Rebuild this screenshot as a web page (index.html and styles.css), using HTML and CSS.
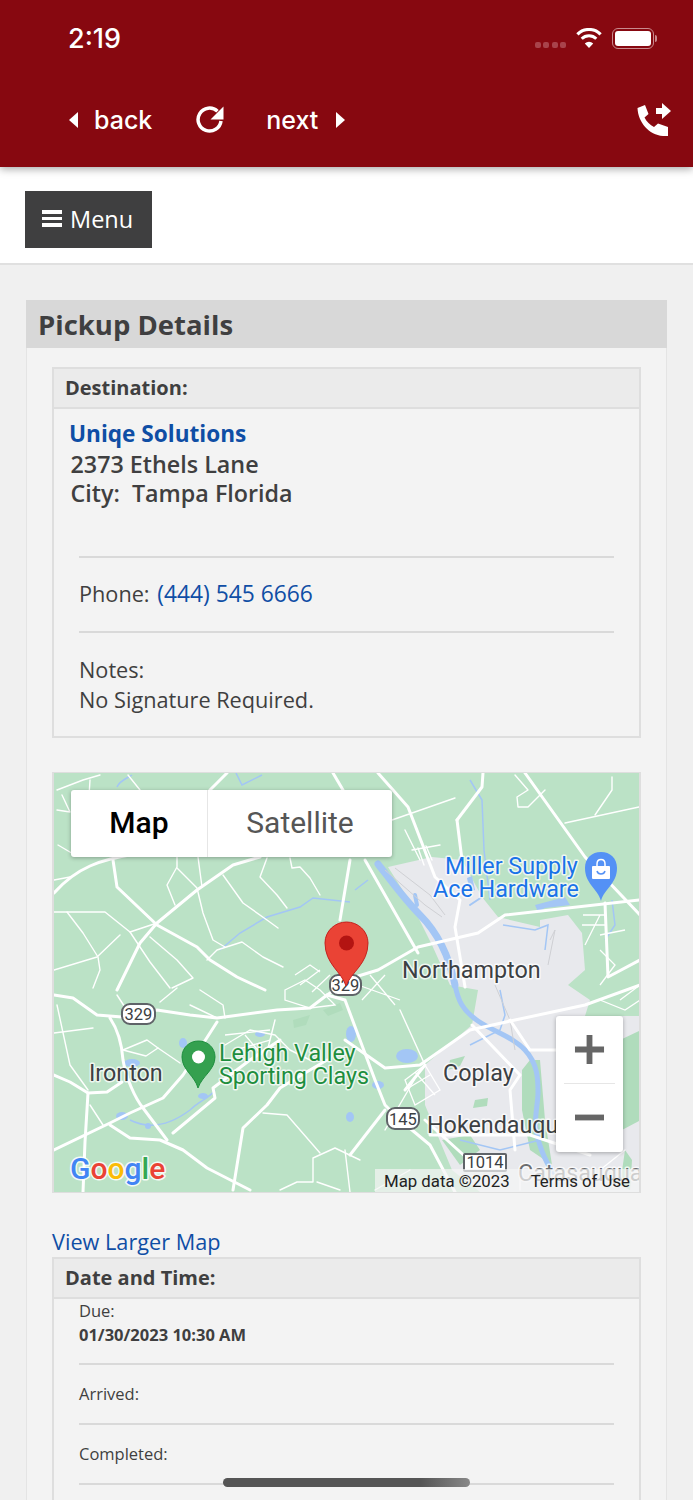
FILE: index.html
```html
<!DOCTYPE html>
<html lang="en">
<head>
    <meta charset="UTF-8">
    <meta name="viewport" content="width=device-width, initial-scale=1.0">
    <title>Pickup Details</title>
    <link rel="stylesheet" href="styles.css">
</head>
<body>
    <header class="app-header">
        <div class="status-bar">
            <span class="clock">2:19</span>
            <div class="status-icons">
                <div class="signal"><i></i><i></i><i></i><i></i></div>
                <svg class="wifi" viewBox="0 0 26 20"><path d="M13 20 8.800 15.400A6.200 6.200 0 0 1 17.200 15.400z" fill="#fff"/><path d="M5.700 10.800A10.400 10.400 0 0 1 20.300 10.800" fill="none" stroke="#fff" stroke-width="3"/><path d="M1.400 6.300A16.400 16.400 0 0 1 24.600 6.300" fill="none" stroke="#fff" stroke-width="3.200"/></svg>
                <div class="battery"><div class="battery-body"><div class="battery-fill"></div></div><div class="battery-cap"></div></div>
            </div>
        </div>
        <nav class="nav-bar">
            <a class="nav-link back-link"><span class="arrow arrow-left"></span>back</a>
            <svg class="reload" viewBox="196 107 28 28"><path d="M217.500 112.200A11.500 11.500 0 1 0 221 122" fill="none" stroke="#fff" stroke-width="3.500"/><path d="M223.500 107.500V120.500H210.500z" fill="#fff"/></svg>
            <a class="nav-link next-link">next<span class="arrow arrow-right"></span></a>
            <svg class="call-forward" viewBox="637 103 34 34"><path d="M637.500 108 645 105 648.500 114 644.500 117.500C646.500 121.500 650 125 654 127L658 123.500 668 127V136H663C649 135 638 122 637.500 108z"/><path d="M656 108h6v-5l9 8-9 8v-5h-6z"/></svg>
        </nav>
    </header>

    <div class="menu-band">
        <button class="menu-btn"><span class="bars"><i></i><i></i><i></i></span>Menu</button>
    </div>

    <main class="panel">
        <h1 class="panel-title">Pickup Details</h1>
        <div class="panel-body">

            <section class="box">
                <h2 class="box-title">Destination:</h2>
                <div class="address">
                    <a class="company">Uniqe Solutions</a>
                    <div class="address-line">2373 Ethels Lane</div>
                    <div class="address-line">City:&nbsp; Tampa Florida</div>
                </div>
                <div class="row phone-row">Phone: <a class="phone">(444) 545 6666</a></div>
                <div class="row notes-row">Notes:<br>No Signature Required.</div>
            </section>

            <div class="map">
                <svg class="map-art" viewBox="54 773 587 419">
                    <rect x="54" y="773" width="587" height="419" fill="#bbe2c6"/>
                    <g fill="#e8e9ed">
                        <path d="M388 867 432 857 462 860 482 897 498 917 540 927 540 920 568 915 582 933 585 970 568 985 590 1000 585 1016 641 1016 641 1192 480 1192 452 1170 425 1105 425 1065 472 1025 478 990 450 985 432 945 412 905z"/>
                    </g>
                    <g fill="#b0dcbc">
                        <path d="M522 1070 530 1060 540 1060 545 1120 552 1165 530 1150 522 1110z"/>
                        <path d="M620 1040 641 1030 641 1120 622 1130z"/>
                        <path d="M475 1100 488 1098 487 1106 473 1108z"/>
                        <path d="M450 1060 465 1056 460 1066 448 1070z"/>
                        <path d="M442 1140 470 1135 480 1150 460 1165z"/>
                        <path d="M323 1010 340 1003 343 1010 328 1016z"/>
                        <path d="M293 1020 310 1015 306 1025 294 1028z"/>
                        <path d="M620 1185 625 1150 632 1160 630 1190z"/>
                    </g>
                    <g fill="none" stroke="#a3c6f5" stroke-linecap="round" stroke-linejoin="round">
                        <path d="M378 864C392 882 405 900 420 915S448 950 455 985" stroke-width="7"/>
                        <path d="M455 985C458 1000 462 1010 478 1021S512 1036 525 1050 538 1080 538 1092 534 1118 536 1130 544 1160 553 1172" stroke-width="5"/>
                        <path d="M415 895 417 905" stroke-width="4"/>
                        <path d="M470 905 482 897" stroke-width="2"/>
                    </g>
                    <g fill="#a3c6f5">
                        <path d="M535 905 565 897 570 905 545 908 538 912z"/>
                        <path d="M467 878 472 876 475 890 470 892z"/>
                        <ellipse cx="183" cy="1043" rx="4" ry="5"/>
                        <ellipse cx="132" cy="1063" rx="8" ry="4"/>
                        <ellipse cx="122" cy="1116" rx="6" ry="4"/>
                        <ellipse cx="203" cy="1096" rx="5" ry="3"/>
                        <ellipse cx="148" cy="1126" rx="3" ry="3"/>
                        <ellipse cx="407" cy="1056" rx="11" ry="7"/>
                        <ellipse cx="378" cy="1085" rx="6" ry="4"/>
                        <ellipse cx="351" cy="1034" rx="5" ry="8"/>
                        <ellipse cx="350" cy="1117" rx="4" ry="5"/>
                        <ellipse cx="260" cy="1034" rx="5" ry="3"/>
                    </g>
                    <g fill="none" stroke="#a3c6f5" stroke-width="1.500">
                        <path d="M220 950 240 933 267 917 300 907 313 898 350 902"/>
                        <path d="M470 780 482 800 484 850 490 900"/>
                        <path d="M503 925 535 930 548 925 545 950"/>
                        <path d="M117 787C120 780 128 778 132 775"/>
                        <path d="M236 773 242 785 262 775"/>
                        <path d="M130 1120C150 1130 170 1125 190 1110 200 1100 210 1098 215 1090"/>
                        <path d="M460 1140 500 1150 540 1140"/>
                        <path d="M500 990 505 1015 500 1030 470 1045"/>
                        <path d="M355 890 368 880"/>
                        <path d="M605 940 615 925 612 900"/>
                    </g>
                    <g fill="none" stroke="#cfd0d4" stroke-width="1">
                        <path d="M385 870 425 905 442 917"/>
                        <path d="M395 868 430 895 445 915"/>
                        <path d="M550 940 555 930 548 965"/>
                        <path d="M495 985 510 1020 515 1050"/>
                    </g>
                    <g fill="none" stroke="#fff" stroke-width="1.400" stroke-linejoin="round" stroke-linecap="round">
                        <path d="M54 912H105L130 932 157 923"/>
                        <path d="M67 912 83 933 98 957 100 970 93 988"/>
                        <path d="M54 970 97 957 120 935"/>
                        <path d="M130 932 150 962 170 988"/>
                        <path d="M150 937 177 960 193 978 172 988"/>
                        <path d="M177 857V867L167 885 175 905"/>
                        <path d="M177 868 197 888 203 913 213 940 225 947"/>
                        <path d="M198 857 202 887"/>
                        <path d="M223 875 243 903 267 920 278 928"/>
                        <path d="M267 858 260 877 277 895 287 908"/>
                        <path d="M290 858 292 868 300 867 310 878 320 895"/>
                        <path d="M207 960 217 950 242 942 263 957 283 967"/>
                        <path d="M57 790 83 780 100 775"/>
                        <path d="M57 810 70 812 62 795"/>
                        <path d="M54 880 70 877"/>
                        <path d="M58 845 75 855 90 850"/>
                        <path d="M140 790 128 775 M88 812 90 780"/>
                        <path d="M565 823 639 807"/>
                        <path d="M595 815 612 790 612 777"/>
                        <path d="M515 775 528 790 517 797 518 807 528 807 545 790"/>
                        <path d="M392 820 455 798"/>
                        <path d="M405 830 420 860 M412 850 440 845 M418 848 424 865 M426 846 432 860"/>
                        <path d="M54 1033 93 1028"/>
                        <path d="M57 1005 70 1065 88 1090"/>
                        <path d="M123 1050 147 1040 158 1048 146 1056 123 1050"/>
                        <path d="M158 1048 180 1063"/>
                        <path d="M90 1105 103 1125"/>
                        <path d="M263 1113 287 1115 320 1153"/>
                        <path d="M280 1190 297 1182H313L313 1158 335 1148 360 1160"/>
                        <path d="M317 1182 340 1190"/>
                        <path d="M117 995 130 1015 M160 1002 177 988 M190 1005 217 1018 M200 990 223 1005 225 1018"/>
                        <path d="M275 1020 265 1060 M225 1045 250 1030 275 1035 290 1050 310 1060"/>
                        <path d="M400 1010 425 1065 M420 1070 385 1130"/>
                        <path d="M600 1170 625 1150 M520 1170 520 1190"/>
                        <path d="M345 1150 350 1192 M375 1190 410 1170"/>
                    </g>
                    <g fill="none" stroke="#fff" stroke-width="1.300">
                        <path d="M285 990 305 980 320 990 335 1005 310 1008 285 1000z"/>
                        <path d="M295 975 310 965 320 972 M300 985 320 970 M312 992 330 975"/>
                        <path d="M225 1035 270 1030 M235 1050 270 1040 M245 1035 262 1055"/>
                        <path d="M405 1080 425 1065 440 1090 415 1105z M415 1072 435 1095 M405 1090 430 1075"/>
                        <path d="M583 915 605 915 M582 925 605 925 M585 945 600 915 M600 950 615 965 600 985 M600 935 625 930"/>
                        <path d="M358 985 400 1000 M370 975 395 1005 M362 1000 385 975"/>
                        <path d="M600 1000 625 1010 640 1000 M620 1000 640 985"/>
                    </g>
                    <g fill="none" stroke="#fff" stroke-width="3" stroke-linejoin="round" stroke-linecap="round">
                        <path d="M54 893C62 884 72 874 90 866S120 857 165 848"/>
                        <path d="M113 860 117 887 157 925 197 947 210 960 237 977 265 990"/>
                        <path d="M117 990 140 943 157 923 197 890 233 865 260 857"/>
                        <path d="M54 995 73 998 97 1015 122 1017 157 1010 190 1015 217 1018 277 1010 310 1008 327 995 355 977 378 970 418 947 478 933 505 915 640 900"/>
                        <path d="M110 1018C118 1030 122 1045 123 1060 126 1078 135 1098 143 1108L167 1140"/>
                        <path d="M54 1150 110 1123 130 1113 163 1098 183 1075 217 1022"/>
                        <path d="M110 1125 130 1138 160 1140 183 1150 207 1168 250 1190"/>
                        <path d="M173 1133 215 1098 213 1088 250 1060 280 1040"/>
                        <path d="M233 1190 243 1128 267 1105 280 1088 310 1070 327 1060"/>
                        <path d="M54 1075 70 1082 88 1093 107 1092 122 1082"/>
                        <path d="M88 1093 85 1142 83 1192"/>
                        <path d="M378 773 408 807 435 877 460 900 455 927 465 987"/>
                        <path d="M457 820 482 787 483 773"/>
                        <path d="M457 820 462 860"/>
                        <path d="M525 773 585 857 640 915"/>
                        <path d="M340 920 350 860 M333 773 343 790"/>
                        <path d="M210 790 227 773"/>
                        <path d="M365 860 418 953"/>
                        <path d="M605 903 608 977 640 960"/>
                        <path d="M327 995 345 1000 375 1080 385 1105 400 1120 430 1145 455 1192"/>
                        <path d="M345 1040 385 1068 420 1065 470 1030 515 1020 585 1005 640 985"/>
                        <path d="M385 1110 350 1155 M405 1090 425 1065"/>
                        <path d="M425 1120 480 1170 M430 1135 530 1135 590 1155"/>
                        <path d="M472 1025 520 1075 510 1090 515 1150"/>
                        <path d="M510 1020 530 1050 560 1050"/>
                    </g>
                    <g class="place-dark">
                        <text x="402" y="978">Northampton</text>
                        <text x="89" y="1081">Ironton</text>
                        <text x="443" y="1081">Coplay</text>
                        <text x="427" y="1133">Hokendauqua</text>
                        <text x="518" y="1181" class="place-faded">Catasauqua</text>
                    </g>
                    <g class="place-blue">
                        <text x="445" y="874">Miller Supply</text>
                        <text x="433" y="897">Ace Hardware</text>
                    </g>
                    <g class="place-green">
                        <text x="219" y="1061">Lehigh Valley</text>
                        <text x="219" y="1084">Sporting Clays</text>
                    </g>
                    <g class="shield">
                        <rect x="122" y="1004" width="33" height="20" rx="8"/>
                        <text x="138.500" y="1020">329</text>
                        <rect x="330" y="975" width="31" height="20" rx="8"/>
                        <text x="345.500" y="991">329</text>
                        <rect x="387" y="1108" width="32" height="21" rx="8"/>
                        <text x="403" y="1125">145</text>
                    </g>
                    <g class="shield shield-square">
                        <rect x="464" y="1154" width="42" height="17" rx="1"/>
                        <text x="485" y="1168">1014</text>
                    </g>
                    <path d="M346 986C342 972 325 964 325 943 325 931 335 922 346.500 922 358 922 368 931 368 943 368 964 351 972 346 986z" fill="#ea4335" stroke="#c5221f"/>
                    <circle cx="346.500" cy="943" r="7.500" fill="#b31412"/>
                    <path d="M198 1088C195 1076 182 1070 182 1057 182 1048 189 1041 198.500 1041 208 1041 215 1048 215 1057 215 1070 202 1076 198 1088z" fill="#34a04f" stroke="#1e8e3e"/>
                    <circle cx="198.500" cy="1057" r="6.500" fill="#fff"/>
                    <path d="M601 901C598 889 585 884 585 868 585 858 592 852 601 852 610 852 617 858 617 868 617 884 604 889 601 901z" fill="#5491f5"/>
                    <rect x="592" y="866" width="18" height="13" rx="1" fill="#fff"/>
                    <path d="M597 866V864C597 858 605 858 605 864V866" fill="none" stroke="#fff" stroke-width="1.500"/>
                    <path d="M597 871C598 875 604 875 605 871" fill="none" stroke="#5491f5" stroke-width="1.500"/>
                    <text class="google" x="70" y="1179"><tspan fill="#4285f4">G</tspan><tspan fill="#ea4335">o</tspan><tspan fill="#fbbc05">o</tspan><tspan fill="#4285f4">g</tspan><tspan fill="#34a853">l</tspan><tspan fill="#ea4335">e</tspan></text>
                </svg>
                <div class="map-type">
                    <div class="map-type-btn active">Map</div>
                    <div class="map-type-btn">Satellite</div>
                </div>
                <div class="zoom-ctrl">
                    <div class="zoom-btn"><svg viewBox="0 0 32 32"><path d="M13 1h6v12h12v6H19v12h-6V19H1v-6h12z"/></svg></div>
                    <div class="zoom-sep"></div>
                    <div class="zoom-btn"><svg viewBox="0 0 32 32"><path d="M1 13h30v6H1z"/></svg></div>
                </div>
                <div class="attribution"><span>Map data ©2023</span><span>Terms of Use</span></div>
            </div>

            <a class="larger-map">View Larger Map</a>

            <section class="box date-box">
                <h2 class="box-title">Date and Time:</h2>
                <div class="date-row due">Due:<br><strong>01/30/2023 10:30 AM</strong></div>
                <div class="date-row">Arrived:</div>
                <div class="date-row">Completed:</div>
            </section>
        </div>
    </main>

    <div class="home-indicator"></div>
</body>
</html>
```

FILE: styles.css
```css
html, body {
    height: 1500px;
    overflow: hidden;
}
body {
    margin: 0;
    background: #f0f0f0;
    font-family: "Open Sans", "Liberation Sans", sans-serif;
    color: #3f3f40;
}
a {
    text-decoration: none;
}

.app-header {
    position: relative;
    z-index: 2;
    height: 167px;
    background: #870810;
    color: #fff;
    box-shadow: 0 2px 8px rgba(0,0,0,0.35);
}
.status-bar {
    display: flex;
    justify-content: space-between;
    align-items: center;
    height: 76px;
    padding: 0 36px 0 68px;
}
.clock {
    font-family: Inter, "Liberation Sans", sans-serif;
    font-size: 27px;
    font-weight: 500;
}
.status-icons {
    display: flex;
    align-items: center;
    gap: 10px;
}
.signal {
    display: flex;
    gap: 2.400px;
    margin-top: 14px;
}
.signal i {
    width: 6px;
    height: 6px;
    border-radius: 2px;
    background: #a8434b;
}
.wifi {
    width: 26px;
    height: 20px;
}
.battery {
    display: flex;
    align-items: center;
    gap: 1px;
}
.battery-body {
    box-sizing: border-box;
    width: 42px;
    height: 21px;
    padding: 2px;
    border: 1.500px solid #c98a8e;
    border-radius: 6px;
}
.battery-fill {
    height: 100%;
    background: #fff;
    border-radius: 3px;
}
.battery-cap {
    width: 2px;
    height: 7px;
    background: #c98a8e;
    border-radius: 0 2px 2px 0;
}

.nav-bar {
    display: flex;
    align-items: center;
    height: 88px;
    padding: 0 22px 0 69px;
}
.nav-link {
    display: flex;
    align-items: center;
    font-family: Inter, "Liberation Sans", sans-serif;
    font-size: 25px;
    font-weight: 500;
}
.arrow {
    width: 0;
    height: 0;
    border-top: 8px solid transparent;
    border-bottom: 8px solid transparent;
}
.arrow-left {
    margin-right: 16px;
    border-right: 9px solid #fff;
}
.arrow-right {
    margin-left: 18px;
    border-left: 9px solid #fff;
}
.reload {
    width: 28px;
    height: 28px;
    margin: 0 42px 0 44px;
}
.call-forward {
    width: 34px;
    height: 34px;
    margin-left: auto;
    fill: #fff;
}

.menu-band {
    height: 98px;
    box-sizing: border-box;
    padding-top: 24px;
    background: #fff;
    border-bottom: 2px solid #e0e0e0;
}
.menu-btn {
    display: flex;
    align-items: center;
    gap: 8px;
    width: 127px;
    height: 57px;
    margin-left: 25px;
    padding: 0 0 2px 17px;
    border: 0;
    background: #3f3f40;
    color: #fff;
    font-family: inherit;
    font-size: 23.500px;
}
.bars {
    display: flex;
    flex-direction: column;
    gap: 3px;
}
.bars i {
    display: block;
    width: 20px;
    height: 3.500px;
    background: #fff;
}

.panel {
    margin: 35px 26px 0;
}
.panel-title {
    margin: 0;
    height: 48px;
    padding-left: 12px;
    background: #d8d8d8;
    font-size: 27.500px;
    font-weight: 700;
    line-height: 50px;
}
.panel-body {
    padding: 19px 25px 0;
    background: #f3f3f3;
    border: solid #e4e4e4;
    border-width: 0 1px;
}
.box {
    border: 2px solid #dedede;
}
.box-title {
    margin: 0;
    height: 38px;
    padding-left: 11px;
    background: #ebebeb;
    border-bottom: 2px solid #dedede;
    font-size: 20px;
    font-weight: 700;
    line-height: 38px;
}
.address {
    padding: 9px 0 0 15px;
    height: 147px;
    box-sizing: border-box;
    font-size: 23.300px;
    font-weight: 600;
    line-height: 29px;
}
.company {
    display: block;
    color: #0f4ea5;
    font-size: 22.600px;
    font-weight: 700;
    line-height: 32px;
}
.address-line {
    padding-left: 1.500px;
}
.row {
    margin: 0 25px;
    font-size: 21.700px;
    border-top: 2px solid #d9d9d9;
}
.phone-row {
    height: 73px;
    line-height: 72px;
}
.phone {
    margin-left: 2px;
    color: #0f4ea5;
    font-size: 22.800px;
}
.notes-row {
    height: 105px;
    box-sizing: border-box;
    padding-top: 22px;
    line-height: 30px;
}

.map {
    position: relative;
    height: 419px;
    margin-top: 34px;
    border: solid #dedede;
    border-width: 1px 2px;
    overflow: hidden;
}
.map-art {
    display: block;
    width: 587px;
    height: 419px;
}
.map-art text {
    font-family: Roboto, "Liberation Sans", sans-serif;
    paint-order: stroke;
    stroke: rgba(255,255,255,0.75);
    stroke-width: 3px;
    stroke-linejoin: round;
}
.place-dark text {
    font-size: 23.300px;
    fill: #3c4043;
}
.map-art .place-faded {
    fill: rgba(60,64,67,0.75);
}
.place-blue text {
    font-size: 23.300px;
    fill: #1a73e8;
}
.place-green text {
    font-size: 23.300px;
    fill: #1e8e3e;
}
.shield rect {
    fill: #fff;
    stroke: #5f6368;
    stroke-width: 2;
}
.map-art .shield text {
    font-size: 16.500px;
    text-anchor: middle;
    fill: #3c4043;
    stroke: none;
}
.map-art .google {
    font-size: 30px;
    font-weight: 500;
    stroke: rgba(255,255,255,0.85);
}
.map-type {
    position: absolute;
    top: 17px;
    left: 17px;
    display: flex;
    height: 67px;
    background: #fff;
    border-radius: 3px;
    box-shadow: 0 1px 4px rgba(0,0,0,0.3);
}
.map-type-btn {
    width: 136px;
    font-family: Roboto, "Liberation Sans", sans-serif;
    font-size: 30px;
    line-height: 66px;
    text-align: center;
    color: #565656;
}
.map-type-btn + .map-type-btn {
    width: 184px;
    border-left: 1px solid #e6e6e6;
}
.map-type-btn.active {
    color: #000;
    font-weight: 500;
}
.zoom-ctrl {
    position: absolute;
    top: 243px;
    left: 502px;
    width: 67px;
    height: 136px;
    background: #fff;
    border-radius: 3px;
    box-shadow: 0 1px 4px rgba(0,0,0,0.3);
}
.zoom-btn {
    display: flex;
    justify-content: center;
    align-items: center;
    height: 67px;
}
.zoom-btn svg {
    width: 31px;
    height: 31px;
    fill: #666;
}
.zoom-sep {
    height: 1px;
    margin: 0 8px;
    background: #e6e6e6;
}
.attribution {
    position: absolute;
    right: 0;
    bottom: 0;
    display: flex;
    gap: 21px;
    box-sizing: border-box;
    width: 264px;
    height: 23px;
    padding-left: 9px;
    background: rgba(245,245,245,0.7);
    font-family: Roboto, "Liberation Sans", sans-serif;
    font-size: 16.800px;
    line-height: 24px;
    color: #222;
    white-space: nowrap;
}

.larger-map {
    display: block;
    margin-top: 33px;
    color: #0f4ea5;
    font-size: 21.700px;
    line-height: 31px;
}
.date-box {
    margin-top: 0;
    padding-bottom: 40px;
}
.date-row {
    height: 60px;
    box-sizing: border-box;
    margin: 0 25px;
    padding-top: 17px;
    border-bottom: 2px solid #d9d9d9;
    font-size: 16.500px;
    line-height: 24px;
}
.date-row.due {
    height: 66px;
    padding-top: 0;
}
.date-row strong {
    font-weight: 700;
    font-size: 16.500px;
}

.home-indicator {
    position: absolute;
    left: 223px;
    top: 1478px;
    width: 247px;
    height: 9px;
    border-radius: 5px;
    background: linear-gradient(90deg, #555 0%, #555 80%, #888 100%);
}
```
